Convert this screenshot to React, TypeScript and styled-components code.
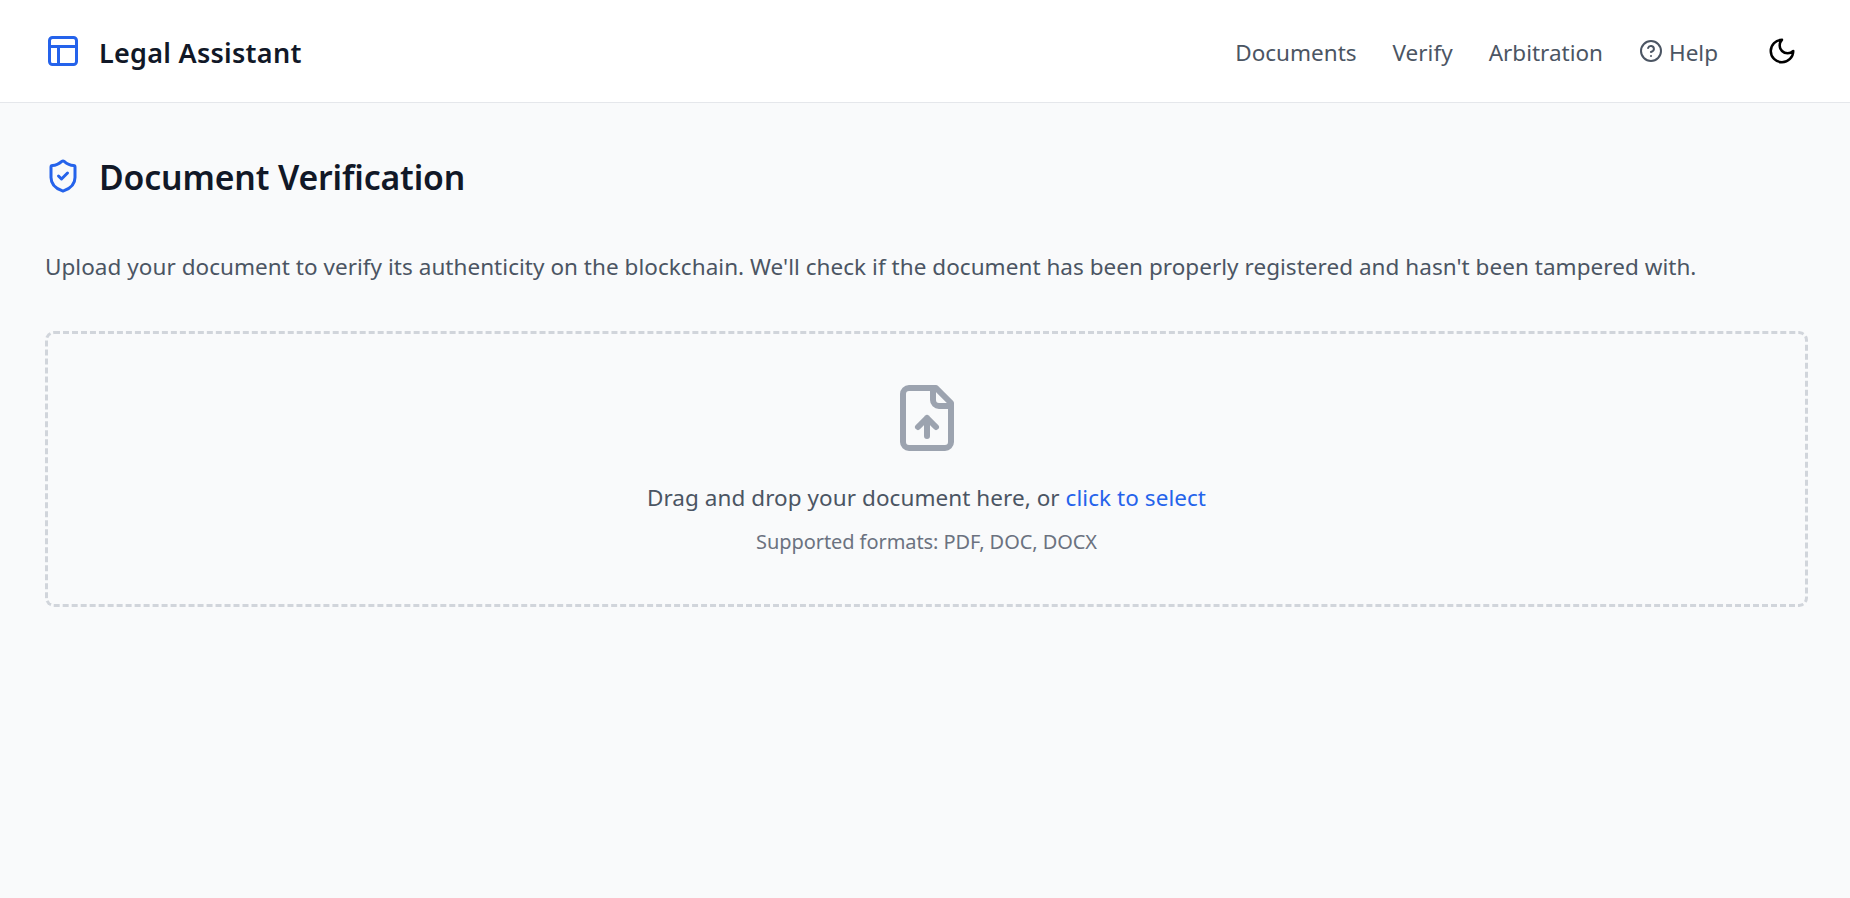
import * as React from 'react'
import styled, { createGlobalStyle } from 'styled-components'

const GlobalStyle = createGlobalStyle`
  html, body { margin: 0; padding: 0; }
  body {
    background: #f9fafb;
    font-family: 'Noto Sans', 'Open Sans', sans-serif;
    color: #111827;
  }
  * { box-sizing: border-box; }
`

const Page = styled.div`
  min-height: 898px;
  display: flex;
  flex-direction: column;
`

const Header = styled.header`
  height: 103px;
  background: #fff;
  border-bottom: 1px solid #e5e7eb;
  display: flex;
  align-items: center;
  justify-content: space-between;
  padding: 0 45px;
`

const Brand = styled.div`
  display: flex;
  align-items: center;
  gap: 18px;
  font-size: 27px;
  font-weight: 600;
  letter-spacing: 0.27px;
`

const BrandName = styled.span`
  margin-top: 2px;
`

const Nav = styled.nav`
  display: flex;
  align-items: center;
  padding-right: 8px;
`

const NavLink = styled.a`
  display: flex;
  align-items: center;
  gap: 6px;
  font-size: 22.5px;
  color: #4b5563;
  margin-right: 36px;
`

const NavLabel = styled.span`
  margin-top: 2px;
`

const ThemeButton = styled.button`
  display: flex;
  border: 0;
  padding: 0;
  background: none;
  color: #000;
  margin-left: 13px;
`

const Main = styled.main`
  padding: 54px 42px 45px 45px;
  display: flex;
  flex-direction: column;
`

const Title = styled.h1`
  margin: 0;
  display: flex;
  align-items: center;
  gap: 18px;
  font-size: 33.75px;
  font-weight: 600;
  letter-spacing: -0.14px;
  line-height: 40px;
`

const ShieldIcon = styled.svg`
  margin-top: -3px;
`

const Intro = styled.p`
  margin: 52px 0 0;
  font-size: 22.5px;
  line-height: 36px;
  letter-spacing: 0.04px;
  color: #4b5563;
`

const DropZone = styled.div`
  margin-top: 46px;
  height: 276px;
  border: 3px dashed #d1d5db;
  border-radius: 9px;
  display: flex;
  flex-direction: column;
  align-items: center;
  padding-top: 48px;
`

const DropText = styled.p`
  margin: 26px 0 0;
  font-size: 22.5px;
  line-height: 36px;
  letter-spacing: 0.06px;
  color: #4b5563;
`

const Accent = styled.span`
  color: #2563eb;
`

const Formats = styled.p`
  margin: 12px 0 0;
  font-size: 20px;
  line-height: 28px;
  letter-spacing: -0.07px;
  color: #6b7280;
`

const App: React.FC = () => (
  <Page>
    <GlobalStyle />
    <Header>
      <Brand>
        <svg width="36" height="36" viewBox="0 0 24 24" fill="none" stroke="#2563eb" strokeWidth="2" strokeLinecap="round" strokeLinejoin="round">
          <rect x="3" y="3" width="18" height="18" rx="2" />
          <path d="M3 9h18M9 21V9" />
        </svg>
        <BrandName>Legal Assistant</BrandName>
      </Brand>
      <Nav>
        <NavLink><NavLabel>Documents</NavLabel></NavLink>
        <NavLink><NavLabel>Verify</NavLabel></NavLink>
        <NavLink><NavLabel>Arbitration</NavLabel></NavLink>
        <NavLink>
          <svg width="24" height="24" viewBox="0 0 24 24" fill="none" stroke="currentColor" strokeWidth="2" strokeLinecap="round" strokeLinejoin="round">
            <circle cx="12" cy="12" r="10" />
            <path d="M9.09 9a3 3 0 0 1 5.83 1c0 2-3 3-3 3M12 17h.01" />
          </svg>
          <NavLabel>Help</NavLabel>
        </NavLink>
        <ThemeButton>
          <svg width="30" height="30" viewBox="0 0 24 24" fill="none" stroke="currentColor" strokeWidth="2" strokeLinecap="round" strokeLinejoin="round">
            <path d="M12 3a6 6 0 0 0 9 9 9 9 0 1 1-9-9Z" />
          </svg>
        </ThemeButton>
      </Nav>
    </Header>
    <Main>
      <Title>
        <ShieldIcon width="36" height="36" viewBox="0 0 24 24" fill="none" stroke="#2563eb" strokeWidth="2" strokeLinecap="round" strokeLinejoin="round">
          <path d="M20 13c0 5-3.5 7.5-7.66 8.95a1 1 0 0 1-.67-.01C7.5 20.5 4 18 4 13V6a1 1 0 0 1 1-1c2 0 4.5-1.2 6.24-2.72a1.17 1.17 0 0 1 1.52 0C14.51 3.81 17 5 19 5a1 1 0 0 1 1 1z" />
          <path d="m9 12 2 2 4-4" />
        </ShieldIcon>
        Document Verification
      </Title>
      <Intro>Upload your document to verify its authenticity on the blockchain. We'll check if the document has been properly registered and hasn't been tampered with.</Intro>
      <DropZone>
        <svg width="72" height="72" viewBox="0 0 24 24" fill="none" stroke="#9ca3af" strokeWidth="2" strokeLinecap="round" strokeLinejoin="round">
          <path d="M15 2H6a2 2 0 0 0-2 2v16a2 2 0 0 0 2 2h12a2 2 0 0 0 2-2V7Z" />
          <path d="M14 2v4a2 2 0 0 0 2 2h4M12 12v6M15 15l-3-3-3 3" />
        </svg>
        <DropText>Drag and drop your document here, or <Accent>click to select</Accent></DropText>
        <Formats>Supported formats: PDF, DOC, DOCX</Formats>
      </DropZone>
    </Main>
  </Page>
)

export default App
